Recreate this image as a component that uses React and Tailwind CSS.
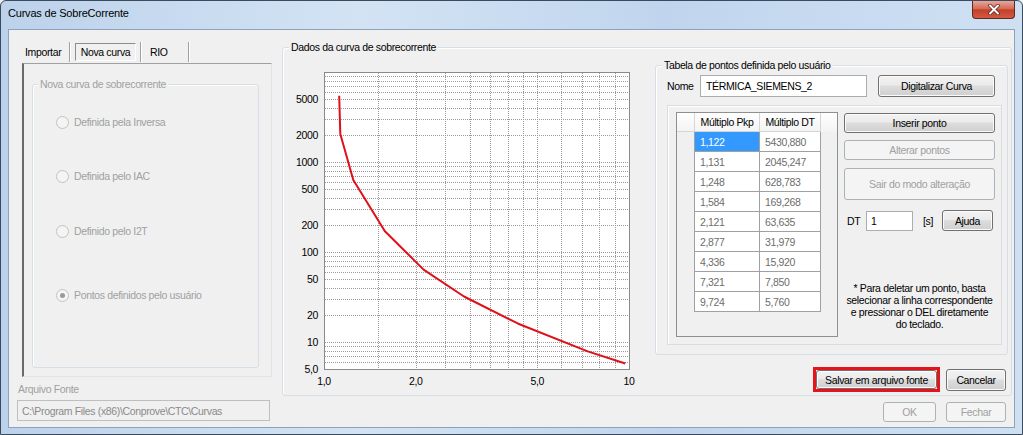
import React from 'react';

const btn = "flex shrink-0 items-center justify-center rounded-[3px] border border-[#707070] bg-[linear-gradient(to_bottom,#f2f2f2,#ebebeb_45%,#dddddd_50%,#cfcfcf)] shadow-[inset_0_0_0_1px_#fbfbfb] text-black whitespace-nowrap";
const btnOff = "flex shrink-0 items-center justify-center rounded-[3px] border border-[#adb2b5] bg-[#f4f4f4] text-[#a0a0a0] whitespace-nowrap";

const rows = [
  ['1,122', '5430,880'],
  ['1,131', '2045,247'],
  ['1,248', '628,783'],
  ['1,584', '169,268'],
  ['2,121', '63,635'],
  ['2,877', '31,979'],
  ['4,336', '15,920'],
  ['7,321', '7,850'],
  ['9,724', '5,760'],
];

const xs = (v) => 41 + Math.log10(v) * 305;
const ys = (v) => 321 - Math.log10(v / 5) * 90;

function Chart() {
  const hLines = [];
  [1, 10, 100, 1000].forEach((d) => {
    for (let m = 1; m <= 9; m++) {
      const v = m * d;
      if (v > 5 && v < 10000) hLines.push(v);
    }
  });
  const vLines = [1.5, 2, 2.5, 3, 3.5, 4, 4.5, 5, 6, 7, 8, 9];
  const yLabels = [['5000', 5000], ['2000', 2000], ['1000', 1000], ['500', 500], ['200', 200], ['100', 100], ['50', 50], ['20', 20], ['10', 10], ['5,0', 5]];
  const xLabels = [['1,0', 1], ['2,0', 2], ['5,0', 5], ['10', 10]];
  const pts = rows.map(([a, b]) => `${xs(parseFloat(a.replace(',', '.'))).toFixed(1)},${ys(parseFloat(b.replace(',', '.'))).toFixed(1)}`).join(' ');

  return (
    <svg width="364" height="344" className="block shrink-0">
      <rect x="41.5" y="24.5" width="305" height="297" fill="#fff" stroke="#8a8a8a" />
      {hLines.map((v) => (
        <line key={'h' + v} x1="42" x2="346" y1={Math.round(ys(v)) + 0.5} y2={Math.round(ys(v)) + 0.5} stroke="#9a9a9a" strokeDasharray="1 1" />
      ))}
      {vLines.map((v) => (
        <line key={'v' + v} y1="25" y2="321" x1={Math.round(xs(v)) + 0.5} x2={Math.round(xs(v)) + 0.5} stroke="#9a9a9a" strokeDasharray="1 1" />
      ))}
      <polyline points={pts} fill="none" stroke="#e0101a" strokeWidth="2" strokeLinejoin="round" />
      {yLabels.map(([t, v]) => (
        <text key={t} x="35" y={ys(v) + 4} textAnchor="end" fontSize="10.5" fill="#000" fontFamily="Liberation Sans, sans-serif">{t}</text>
      ))}
      {xLabels.map(([t, v]) => (
        <text key={t} x={xs(v)} y="337" textAnchor="middle" fontSize="10.5" fill="#000" fontFamily="Liberation Sans, sans-serif">{t}</text>
      ))}
    </svg>
  );
}

function Radio({ label, checked }) {
  return (
    <div className="flex items-center h-[14px]">
      <span className="ml-[23px] w-[13px] h-[13px] rounded-full border border-[#c2c2c2] bg-[#f4f4f4] flex items-center justify-center">
        {checked && <span className="w-[5px] h-[5px] rounded-full bg-[#9a9a9a]" />}
      </span>
      <span className="ml-[5px] text-[#a0a0a0]">{label}</span>
    </div>
  );
}

export default function App() {
  return (
    <div className="w-[1023px] h-[435px] overflow-hidden bg-[#f0f0f0] [font-family:'Liberation_Sans',Arial,sans-serif]">
      <div className="w-[1023px] h-[435px] flex flex-col rounded-t-[6px] border border-[#3b4b5e] bg-[linear-gradient(90deg,#bcd2eb,#d3e3f4_35%,#c0d5ed_65%,#cfe0f3)]">
        {/* title bar */}
        <div className="h-[28px] flex items-start shrink-0">
          <span className="ml-[7px] mt-[5px] text-[11px] tracking-[-0.2px] leading-[14px] text-black">Curvas de SobreCorrente</span>
          <div className="ml-auto mr-[7px] w-[43px] h-[18px] rounded-b-[4px] border border-t-0 border-[#5d2a24] bg-[linear-gradient(to_bottom,#e6a79b,#d56c58_45%,#c4402a_52%,#d25a42)] flex items-center justify-center">
            <svg width="12" height="11" viewBox="0 0 12 11">
              <path d="M2 1.5 L10 9.5 M10 1.5 L2 9.5" stroke="#5a1b12" strokeWidth="3.4" strokeLinecap="round" />
              <path d="M2 1.5 L10 9.5 M10 1.5 L2 9.5" stroke="#fff" strokeWidth="2" strokeLinecap="round" />
            </svg>
          </div>
        </div>

        {/* client */}
        <div className="mx-[7px] h-[399px] border border-[#8ea3bb] bg-[#f0f0f0] flex text-[10.5px] tracking-[-0.35px] leading-[14px] text-black">
          {/* left column */}
          <div className="w-[273px] shrink-0 flex flex-col">
            <div className="mt-[12px] h-[20px] flex items-center pl-[16px]">
              <span className="w-[44px]">Importar</span>
              <span className="w-[2px] h-[20px] border-l border-r border-l-[#a0a0a0] border-r-white" />
              <span className="ml-[4px] w-[61px] h-[18px] border border-t-[#8c8c8c] border-l-[#8c8c8c] border-r-white border-b-white flex items-center justify-center">Nova curva</span>
              <span className="ml-[4px] w-[2px] h-[20px] border-l border-r border-l-[#a0a0a0] border-r-white" />
              <span className="ml-[8px] w-[38px]">RIO</span>
              <span className="w-[2px] h-[20px] border-l border-r border-l-[#a0a0a0] border-r-white" />
            </div>
            <div className="mt-[1px] ml-[13px] w-[250px] h-[314px] border-l-2 border-t border-r border-b border-l-[#6a6a6a] border-t-[#a0a0a0] border-r-[#e3e3e3] border-b-[#e3e3e3] pt-[20px] pl-[8px]">
              <div className="relative w-[227px] h-[284px] border border-[#d5dfe5] rounded-[3px] shadow-[inset_1px_1px_0_#fff]">
                <span className="absolute left-[5px] top-[-8px] bg-[#f0f0f0] px-[2px] text-[#a0a0a0]">Nova curva de sobrecorrente</span>
                <div className="mt-[30px]"><Radio label="Definida pela Inversa" /></div>
                <div className="mt-[40px]"><Radio label="Definida pelo IAC" /></div>
                <div className="mt-[41px]"><Radio label="Definido pelo I2T" /></div>
                <div className="mt-[50px]"><Radio label="Pontos definidos pelo usuário" checked /></div>
              </div>
            </div>
            <span className="mt-[5px] ml-[9px] text-[#a0a0a0]">Arquivo Fonte</span>
            <div className="mt-[4px] ml-[8px] w-[253px] h-[21px] border border-[#bfbfbf] bg-[#f0f0f0] flex items-center pl-[4px] text-[#8a8a8a]">C:\Program Files (x86)\Conprove\CTC\Curvas</div>
          </div>

          {/* right part */}
          <div className="flex-1 flex flex-col">
            <div className="relative mt-[17px] w-[730px] h-[349px] border border-[#d5dfe5] rounded-[3px] shadow-[inset_1px_1px_0_#fff] flex">
              <span className="absolute left-[6px] top-[-8px] bg-[#f0f0f0] px-[2px]">Dados da curva de sobrecorrente</span>
              <Chart />
              <div className="ml-[8px] w-[353px] flex flex-col">
                <div className="relative mt-[17px] h-[290px] shrink-0 border border-[#d5dfe5] rounded-[3px] shadow-[inset_1px_1px_0_#fff] flex flex-col">
                  <span className="absolute left-[6px] top-[-8px] bg-[#f0f0f0] px-[2px]">Tabela de pontos definida pelo usuário</span>
                  <div className="mt-[9px] flex items-center pl-[11px]">
                    <span className="w-[33px]">Nome</span>
                    <div className="w-[167px] h-[22px] border border-[#abadb3] bg-white flex items-center pl-[5px]">TÉRMICA_SIEMENS_2</div>
                    <div className={`${btn} ml-[11px] w-[117px] h-[22px] border-[#3c7fb1] shadow-[inset_0_0_0_1px_#c4e5f6]`}>Digitalizar Curva</div>
                  </div>
                  <div className="mt-[8px] ml-[11px] w-[335px] h-[240px] shrink-0 border border-[#dcdcdc] shadow-[inset_1px_1px_0_#fff] flex">
                    {/* table */}
                    <div className="mt-[6px] ml-[8px] w-[162px] h-[225px] border border-[#8e8f8f] bg-[#f0f0f0] flex flex-col">
                      <div className="flex h-[19px] shrink-0 bg-[linear-gradient(to_bottom,#ffffff,#f3f3f3)]">
                        <span className="w-[18px] border-r border-b border-[#d5d5d5]" />
                        <span className="w-[65px] border-r border-b border-[#d5d5d5] flex items-center justify-center">Múltiplo Pkp</span>
                        <span className="w-[61px] border-r border-b border-[#d5d5d5] flex items-center justify-center">Múltiplo DT</span>
                      </div>
                      {rows.map(([a, b], i) => (
                        <div key={a} className="flex h-[20px] shrink-0">
                          <span className="w-[18px] border-r border-[#a0a0a0] bg-[#f0f0f0]" />
                          <span className={i === 0 ? "w-[65px] border-r border-b border-[#a0a0a0] bg-[#3399ff] text-white flex items-center pl-[5px]" : "w-[65px] border-r border-b border-[#a0a0a0] bg-white text-[#6d6d6d] flex items-center pl-[5px]"}>{a}</span>
                          <span className="w-[61px] border-r border-b border-[#a0a0a0] bg-white text-[#6d6d6d] flex items-center pl-[5px]">{b}</span>
                        </div>
                      ))}
                    </div>
                    {/* buttons */}
                    <div className="ml-[6px] w-[151px] flex flex-col">
                      <div className={`${btn} mt-[7px] h-[20px]`}>Inserir ponto</div>
                      <div className={`${btnOff} mt-[7px] h-[20px]`}>Alterar pontos</div>
                      <div className={`${btnOff} mt-[8px] h-[32px]`}>Sair do modo alteração</div>
                      <div className="mt-[10px] h-[21px] shrink-0 flex items-center">
                        <span className="ml-[3px] w-[19px]">DT</span>
                        <div className="w-[47px] h-[20px] border border-[#abadb3] bg-white flex items-center pl-[4px]">1</div>
                        <span className="ml-[10px] w-[19px]">[s]</span>
                        <div className={`${btn} w-[51px] h-[21px]`}>Ajuda</div>
                      </div>
                      <p className="mt-[51px] shrink-0 text-center leading-[12px] whitespace-nowrap">
                        * Para deletar um ponto, basta<br />selecionar a linha correspondente<br />e pressionar o DEL diretamente<br />do teclado.
                      </p>
                    </div>
                  </div>
                </div>
                <div className="mt-[12px] flex items-center justify-end pr-[2px]">
                  <div className="w-[127px] h-[25px] border-[3px] border-[#e3141c] flex">
                    <div className={`${btn} flex-1`}>Salvar em arquivo fonte</div>
                  </div>
                  <div className={`${btn} ml-[6px] w-[60px] h-[22px]`}>Cancelar</div>
                </div>
              </div>
            </div>
            <div className="mt-[6px] flex justify-end pr-[8px] gap-[10px]">
              <div className={`${btnOff} w-[53px] h-[20px]`}>OK</div>
              <div className={`${btnOff} w-[60px] h-[20px]`}>Fechar</div>
            </div>
          </div>
        </div>
      </div>
    </div>
  );
}
